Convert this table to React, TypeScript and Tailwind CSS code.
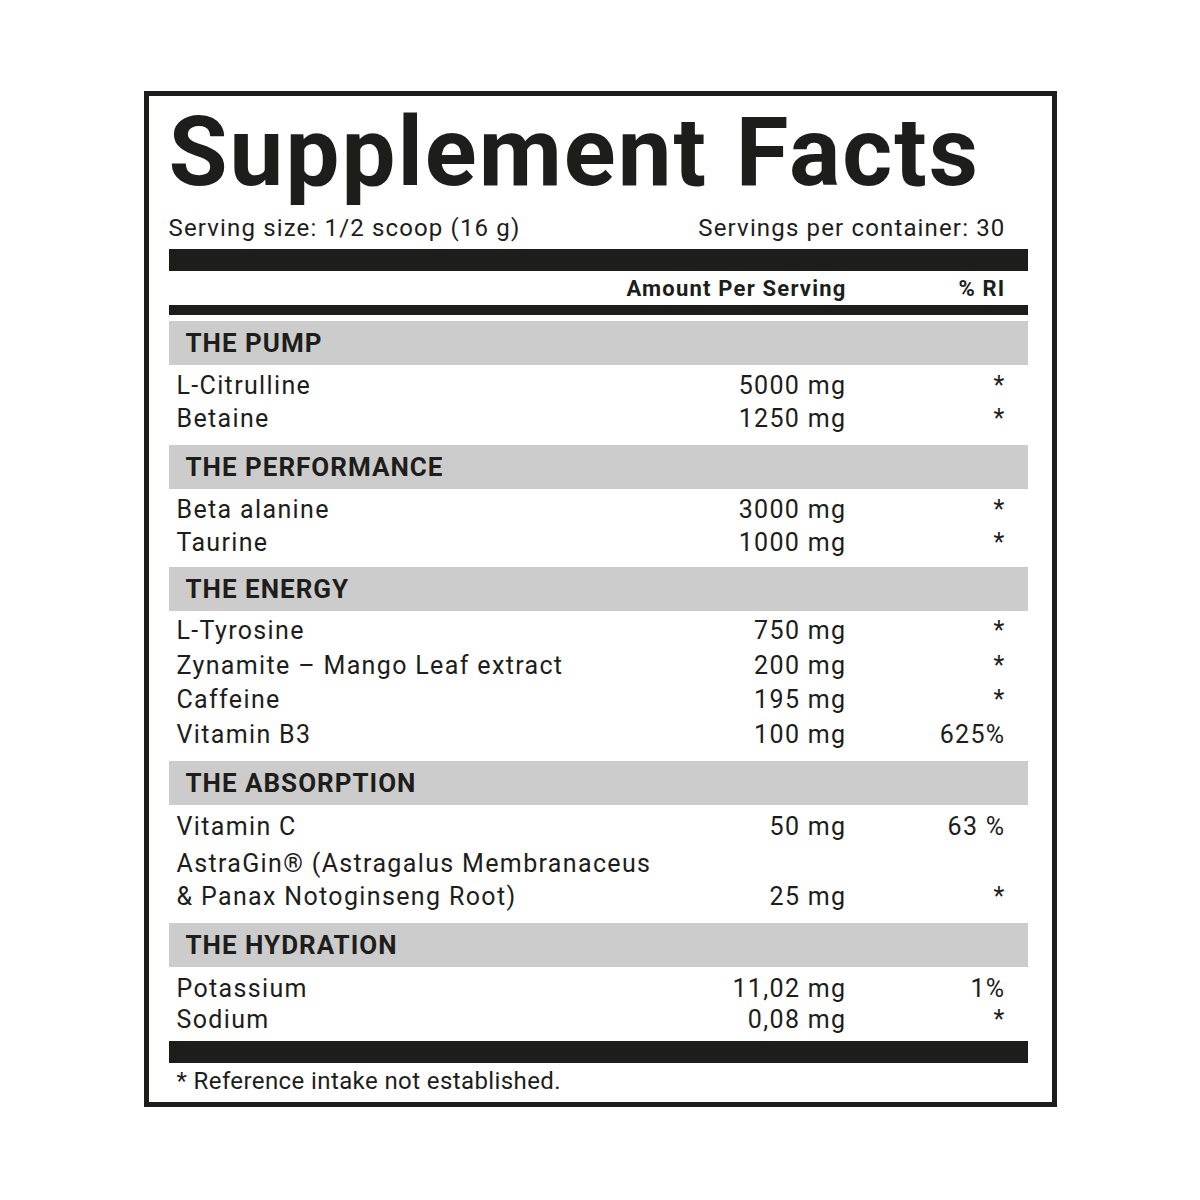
const sections = [
  {
    title: "THE PUMP",
    body: "pt-[4px] pb-[10px] leading-[33px]",
    rows: [
      { name: "L-Citrulline", amount: "5000 mg", ri: "*" },
      { name: "Betaine", amount: "1250 mg", ri: "*" },
    ],
  },
  {
    title: "THE PERFORMANCE",
    body: "pt-[4px] pb-[8px] leading-[33px]",
    rows: [
      { name: "Beta alanine", amount: "3000 mg", ri: "*" },
      { name: "Taurine", amount: "1000 mg", ri: "*" },
    ],
  },
  {
    title: "THE ENERGY",
    body: "pt-[3px] pb-[9px] leading-[34.5px]",
    rows: [
      { name: "L-Tyrosine", amount: "750 mg", ri: "*" },
      { name: "Zynamite – Mango Leaf extract", amount: "200 mg", ri: "*" },
      { name: "Caffeine", amount: "195 mg", ri: "*" },
      { name: "Vitamin B3", amount: "100 mg", ri: "625%" },
    ],
  },
  {
    title: "THE ABSORPTION",
    body: "pt-[5px] pb-[10px] leading-[33px]",
    rows: [
      { name: "Vitamin C", amount: "50 mg", ri: "63 %" },
      {
        name: "AstraGin® (Astragalus Membranaceus",
        name2: "& Panax Notoginseng Root)",
        amount: "25 mg",
        ri: "*",
      },
    ],
  },
  {
    title: "THE HYDRATION",
    body: "pt-[7px] pb-[6px] leading-[30.5px]",
    rows: [
      { name: "Potassium", amount: "11,02 mg", ri: "1%" },
      { name: "Sodium", amount: "0,08 mg", ri: "*" },
    ],
  },
];

export default function App() {
  return (
    <div className="min-h-screen bg-white pt-[91px] font-['Roboto',sans-serif] text-[#1d1d1b]">
      <div className="mx-auto w-[913px] border-[5px] border-[#1d1d1b] pl-[20px] pr-[24px] pt-[8px] pb-[7px]">

        {/* Title */}
        <h1 className="text-[96px] leading-[96px] font-bold tracking-[2px] [word-spacing:2px]">Supplement Facts</h1>

        <div className="mt-[13px] flex justify-between pr-[22px] text-[24px] leading-[30px] tracking-[1.15px]">
          <span>Serving size: 1/2 scoop (16 g)</span>
          <span>Servings per container: 30</span>
        </div>

        <div className="mt-[6px] h-[22px] bg-[#1d1d1b]" />

        {/* Column headers */}
        <div className="flex pl-[8px] pr-[22px] pt-[1px] text-[22px] leading-[33px] font-bold tracking-[1.2px]">
          <span className="flex-1" />
          <span>Amount Per Serving</span>
          <span className="w-[159px] text-right">% RI</span>
        </div>

        <div className="h-[10px] bg-[#1d1d1b]" />

        <div className="mt-[6px]">
          {sections.map(({ title, body, rows }) => (
            <div key={title}>
              <div className="flex h-[44px] items-center bg-[#cdcccc] pl-[17px] text-[26px] font-bold tracking-[1px]">
                {title}
              </div>
              <div className={`text-[25px] tracking-[1.35px] ${body}`}>
                {rows.map((r) => (
                  <div
                    key={r.name}
                    className={`flex items-end pl-[8px] pr-[22px] ${r.name2 ? "mt-[4px]" : ""}`}
                  >
                    <span className="flex-1">
                      {r.name}
                      {r.name2 && <br />}
                      {r.name2}
                    </span>
                    <span className="text-right">{r.amount}</span>
                    <span className="w-[159px] text-right">{r.ri}</span>
                  </div>
                ))}
              </div>
            </div>
          ))}
        </div>

        <div className="h-[22px] bg-[#1d1d1b]" />

        <p className="mt-[4px] pl-[8px] text-[24px] leading-[28px] tracking-[0.4px]">* Reference intake not established.</p>
      </div>
    </div>
  );
}
